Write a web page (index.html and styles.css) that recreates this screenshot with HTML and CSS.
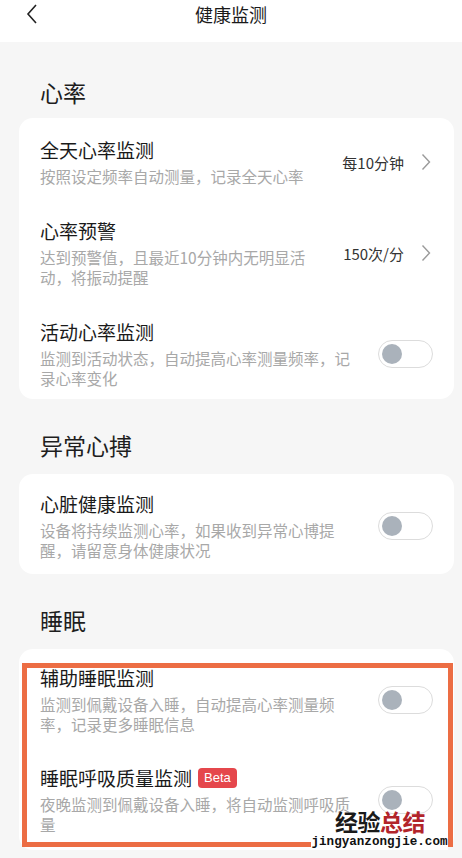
FILE: index.html
```html
<!DOCTYPE html>
<html lang="zh-CN">
<head>
    <meta charset="UTF-8">
    <meta name="viewport" content="width=device-width, initial-scale=1.0">
    <title>健康监测</title>
    <link rel="stylesheet" href="styles.css">
</head>
<body>
    <div class="page">
        <header class="topbar">
            <svg class="back" width="14" height="22" viewBox="0 0 14 22">
                <path d="M11 2 L3 11 L11 20" fill="none" stroke="#222" stroke-width="1.6"/>
            </svg>
            <h1 class="topbar-title">健康监测</h1>
        </header>

        <main class="content">
            <h2 class="section-title first">心率</h2>
            <div class="card card-heart">
                <div class="row">
                    <div class="text">
                        <div class="title">全天心率监测</div>
                        <div class="sub">按照设定频率自动测量，记录全天心率</div>
                    </div>
                    <span class="value">每10分钟</span>
                    <svg class="chevron" width="10" height="18" viewBox="0 0 10 18">
                        <path d="M1.5 1.5 L8.5 9 L1.5 16.5" fill="none" stroke="#9a9a9a" stroke-width="1.4"/>
                    </svg>
                </div>
                <div class="row">
                    <div class="text">
                        <div class="title">心率预警</div>
                        <div class="sub">达到预警值，且最近10分钟内无明显活动，将振动提醒</div>
                    </div>
                    <span class="value">150次/分</span>
                    <svg class="chevron" width="10" height="18" viewBox="0 0 10 18">
                        <path d="M1.5 1.5 L8.5 9 L1.5 16.5" fill="none" stroke="#9a9a9a" stroke-width="1.4"/>
                    </svg>
                </div>
                <div class="row">
                    <div class="text">
                        <div class="title">活动心率监测</div>
                        <div class="sub">监测到活动状态，自动提高心率测量频率，记录心率变化</div>
                    </div>
                    <span class="toggle"><span class="knob"></span></span>
                </div>
            </div>

            <h2 class="section-title">异常心搏</h2>
            <div class="card card-abnormal">
                <div class="row">
                    <div class="text">
                        <div class="title">心脏健康监测</div>
                        <div class="sub">设备将持续监测心率，如果收到异常心博提醒，请留意身体健康状况</div>
                    </div>
                    <span class="toggle"><span class="knob"></span></span>
                </div>
            </div>

            <h2 class="section-title">睡眠</h2>
            <div class="card card-sleep">
                <div class="row">
                    <div class="text">
                        <div class="title">辅助睡眠监测</div>
                        <div class="sub">监测到佩戴设备入睡，自动提高心率测量频率，记录更多睡眠信息</div>
                    </div>
                    <span class="toggle"><span class="knob"></span></span>
                </div>
                <div class="row">
                    <div class="text">
                        <div class="title">睡眠呼吸质量监测<span class="beta">Beta</span></div>
                        <div class="sub">夜晚监测到佩戴设备入睡，将自动监测呼吸质量</div>
                    </div>
                    <span class="toggle"><span class="knob"></span></span>
                </div>
                <div class="highlight"></div>
            </div>
        </main>

        <div class="watermark">
            <div class="wm-name"><span class="wm-dark">经验</span><span class="wm-red">总结</span></div>
            <div class="wm-url">jingyanzongjie.com</div>
        </div>
    </div>
</body>
</html>
```

FILE: styles.css
```css
body {
    margin: 0;
    padding: 0;
    background-color: #f6f6f6;
    font-family: "Noto Sans CJK SC", "Noto Sans", sans-serif;
    color: #1c1c1c;
}

.page {
    position: relative;
    width: 462px;
    height: 858px;
    overflow: hidden;
}

.topbar {
    position: relative;
    height: 42px;
    background-color: #fff;
}

.back {
    position: absolute;
    left: 25px;
    top: 3px;
}

.topbar-title {
    margin: 0;
    font-size: 18px;
    font-weight: 400;
    line-height: 28px;
    text-align: center;
    color: #1a1a1a;
}

.content {
    padding: 0 8px 0 19px;
}

.section-title {
    margin: 0;
    padding: 31px 0 14px 21px;
    font-size: 23px;
    font-weight: 400;
    line-height: 30px;
    color: #1e1e1e;
}

.section-title.first {
    padding-top: 35px;
    padding-bottom: 11px;
}

.card {
    position: relative;
    display: flex;
    flex-direction: column;
    gap: 33px;
    background-color: #fff;
    border-radius: 14px;
}

.card-heart {
    padding: 20px 0 11px;
}

.card-abnormal {
    padding: 18px 0 14px;
}

.card-sleep {
    padding: 17px 0 16px;
    gap: 32px;
}

.row {
    display: flex;
    align-items: center;
    padding: 0 21px 0 21px;
}

.text {
    flex: 1;
    min-width: 0;
    padding-right: 20px;
}

.title {
    display: flex;
    align-items: center;
    font-size: 19px;
    line-height: 24px;
    color: #1a1a1a;
}

.sub {
    margin-top: 4px;
    font-size: 15.5px;
    line-height: 20px;
    color: #a8a8a8;
}

.value {
    font-size: 15px;
    color: #333;
    white-space: nowrap;
}

.chevron {
    margin-left: 17px;
    margin-right: 2px;
}

.toggle {
    position: relative;
    flex-shrink: 0;
    width: 53px;
    height: 26px;
    border: 1px solid #dcdcdc;
    border-radius: 15px;
    background-color: #fff;
}

.knob {
    position: absolute;
    left: 3px;
    top: 3px;
    width: 20px;
    height: 20px;
    border-radius: 50%;
    background-color: #aab2bb;
}

.beta {
    margin-left: 6px;
    padding: 0 6px;
    height: 20px;
    line-height: 20px;
    border-radius: 4px;
    background-color: #e5474c;
    color: #fff;
    font-family: "Liberation Sans", Arial, sans-serif;
    font-size: 13px;
}

.highlight {
    position: absolute;
    left: 3px;
    right: 1px;
    top: 14px;
    height: 174px;
    border: 5px solid #ec6d44;
}

.watermark {
    position: absolute;
    left: 311px;
    top: 808px;
    width: 137px;
}

.wm-name {
    padding-left: 24px;
    font-size: 23px;
    font-weight: 700;
    line-height: 26px;
    letter-spacing: -0.5px;
}

.wm-dark {
    color: #1a1a1a;
}

.wm-red {
    color: #b2242a;
}

.wm-url {
    height: 16px;
    background-color: #fff;
    font-family: "Liberation Mono", monospace;
    font-weight: 700;
    font-size: 12.6px;
    line-height: 16px;
    color: #111;
    text-align: center;
}
```
